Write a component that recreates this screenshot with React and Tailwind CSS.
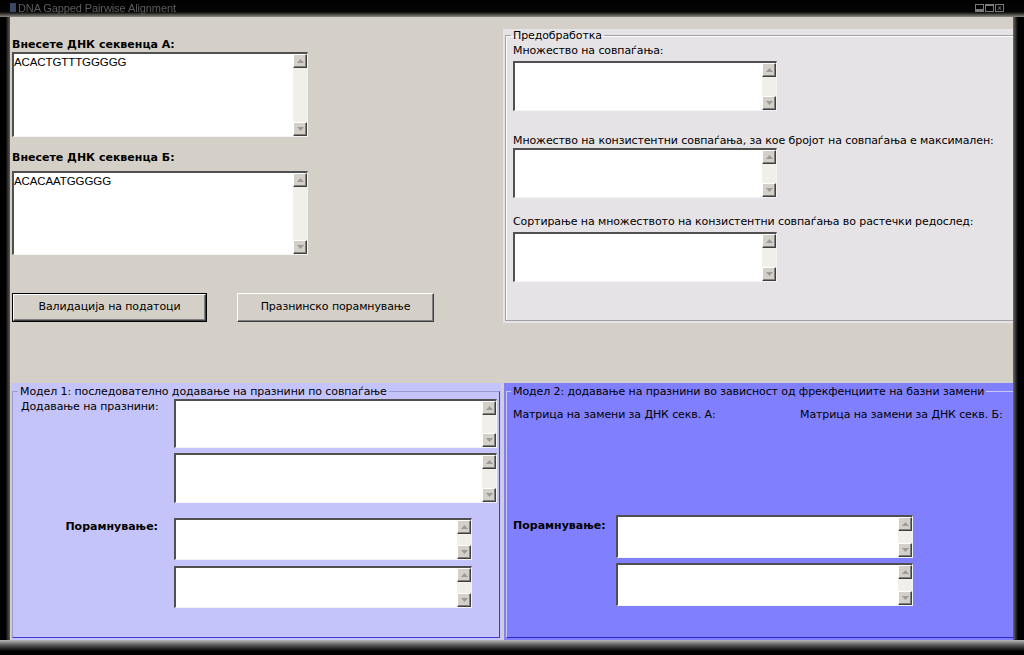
import React from 'react';

function ScrollBtn({ down }) {
  return (
    <div className="h-[14px] w-[14px] bg-[#d4d0c8] border-t border-l border-t-white border-l-white border-r border-b border-r-[#404040] border-b-[#404040] flex items-center justify-center shadow-[inset_-1px_-1px_0_#808080]">
      <svg width="7" height="4" viewBox="0 0 7 4">
        <path d={down ? 'M0 0h7L3.5 4z' : 'M0 4h7L3.5 0z'} fill="#9a9a9a" />
      </svg>
    </div>
  );
}

function TextBox({ className, text }) {
  return (
    <div className={`flex bg-white border-t-2 border-l-2 border-t-[#505050] border-l-[#505050] border-r border-b border-r-[#f4f4f4] border-b-[#f4f4f4] ${className}`}>
      <div className="flex-1 pl-[0px] pt-[2px] text-[11.5px] leading-[13px] text-black font-['Liberation_Sans',sans-serif]">{text}</div>
      <div className="w-[14px] flex flex-col bg-[#f1efea]">
        <ScrollBtn />
        <div className="flex-1" />
        <ScrollBtn down />
      </div>
    </div>
  );
}

function Button({ children, isDefault, className }) {
  return (
    <div className={`${isDefault ? 'border border-black' : ''} ${className}`}>
      <div className="h-full w-full bg-[#d4d0c8] border-t border-l border-t-white border-l-white border-r border-b border-r-[#404040] border-b-[#404040] shadow-[inset_-1px_-1px_0_#808080] flex items-center justify-center text-[11px] text-black">
        {children}
      </div>
    </div>
  );
}

function TitleBar() {
  return (
    <div className="h-[17px] flex items-start pt-[2px] pl-[10px] pr-[20px] bg-[linear-gradient(to_bottom,#000_0%,#050505_70%,#8c8a84_100%)]">
      <div className="w-[6px] h-[9px] mt-[1px] bg-[#3a4866]" />
      <span className="ml-[2px] text-[11px] leading-[12px] text-[#5c5c5c] blur-[0.6px] font-['Liberation_Sans',sans-serif]">DNA Gapped Pairwise Alignment</span>
      <div className="ml-auto flex gap-[1px] mt-[2px]">
        <div className="w-[9px] h-[8px] border border-[#7a7a7a] flex items-end"><div className="h-[2px] w-full bg-[#7a7a7a]" /></div>
        <div className="w-[9px] h-[8px] border border-[#7a7a7a] border-t-2" />
        <div className="w-[9px] h-[8px] border border-[#7a7a7a] text-[7px] leading-[6px] text-[#8a8a8a] text-center">x</div>
      </div>
    </div>
  );
}

export default function App() {
  return (
    <div className="w-[1024px] h-[655px] bg-black flex flex-col overflow-hidden font-['DejaVu_Sans',sans-serif] tracking-[-0.1px]">
      <TitleBar />
      <div className="flex h-[623px]">
        <div className="w-[10px] bg-[linear-gradient(to_right,#000_0%,#000_55%,#5c5c5c_100%)]" />
        <div className="w-[1003px] flex flex-col bg-[#d4d0c8]">
          {/* top */}
          <div className="h-[366px] flex">
            <div className="w-[493px] pl-[2px] flex flex-col">
              <div className="mt-[21px] text-[11px] leading-[14px] font-bold text-black tracking-normal">Внесете ДНК секвенца А:</div>
              <TextBox className="w-[296px] h-[85px]" text="ACACTGTTTGGGGG" />
              <div className="mt-[14px] text-[11px] leading-[14px] font-bold text-black tracking-normal">Внесете ДНК секвенца Б:</div>
              <TextBox className="mt-[6px] w-[296px] h-[84px]" text="ACACAATGGGGG" />
              <div className="mt-[38px] flex">
                <Button isDefault className="w-[195px] h-[29px]">Валидација на податоци</Button>
                <Button className="ml-[30px] w-[197px] h-[29px]">Празнинско порамнување</Button>
              </div>
            </div>
            <div className="w-[510px] mt-[12px] h-[294px] bg-[#e6e3e7] pl-[2px]">
              <fieldset className="h-[292px] border border-r-0 border-[#a3a0a4] shadow-[inset_1px_1px_0_#fff] pl-[7px] flex flex-col">
                <legend className="ml-[-2px] px-[2px] text-[11px] leading-[13px] text-black">Предобработка</legend>
                <div className="mt-[2px] text-[11px] leading-[13px] text-black">Множество на совпаѓања:</div>
                <TextBox className="mt-[4px] w-[264px] h-[50px]" />
                <div className="mt-[23px] text-[11px] leading-[13px] text-black">Множество на конзистентни совпаѓања, за кое бројот на совпаѓања е максимален:</div>
                <TextBox className="mt-[1px] w-[264px] h-[50px]" />
                <div className="mt-[17px] text-[11px] leading-[13px] text-black">Сортирање на множеството на конзистентни совпаѓања во растечки редослед:</div>
                <TextBox className="mt-[4px] w-[264px] h-[50px]" />
              </fieldset>
            </div>
          </div>
          {/* bottom */}
          <div className="h-[257px] flex">
            <div className="ml-[1px] w-[490px] bg-[#c4c4fa] pt-[2px] pl-[1px] pr-[1px]">
              <fieldset className="h-[253px] border border-[#9a9ad0] border-r-[#3c3cd4] border-b-[#3c3cd4] flex flex-col">
                <legend className="ml-[5px] px-[2px] text-[11px] leading-[13px] text-black">Модел 1: последователно додавање на празнини по совпаѓање</legend>
                <div className="mt-[1px] flex items-start">
                  <div className="w-[161px] pl-[8px] pt-[1px] text-[11px] leading-[13px] text-black">Додавање на празнини:</div>
                  <TextBox className="w-[323px] h-[49px]" />
                </div>
                <TextBox className="ml-[161px] mt-[5px] w-[323px] h-[50px]" />
                <div className="mt-[15px] flex items-start">
                  <div className="w-[161px] pr-[16px] pt-[2px] text-right text-[11px] leading-[13px] font-bold text-black tracking-normal">Порамнување:</div>
                  <TextBox className="w-[298px] h-[42px]" />
                </div>
                <TextBox className="ml-[161px] mt-[6px] w-[298px] h-[42px]" />
              </fieldset>
            </div>
            <div className="w-[3px]" />
            <div className="w-[509px] bg-[#8080ff] pt-[2px] pl-[2px]">
              <fieldset className="h-[253px] border border-r-0 border-[#c8c8f0] border-b-[#2a2ad0] flex flex-col">
                <legend className="ml-[4px] px-[2px] text-[11px] leading-[13px] text-black">Модел 2: додавање на празнини во зависност од фрекфенциите на базни замени</legend>
                <div className="mt-[10px] flex text-[11px] leading-[13px] text-black">
                  <div className="w-[293px] pl-[6px]">Матрица на замени за ДНК секв. А:</div>
                  <div>Матрица на замени за ДНК секв. Б:</div>
                </div>
                <div className="mt-[94px] flex items-start">
                  <div className="w-[109px] pl-[6px] pt-[4px] text-[11px] leading-[13px] font-bold text-black tracking-normal">Порамнување:</div>
                  <TextBox className="w-[297px] h-[43px]" />
                </div>
                <TextBox className="ml-[109px] mt-[5px] w-[297px] h-[43px]" />
              </fieldset>
            </div>
          </div>
        </div>
        <div className="flex-1 bg-[linear-gradient(to_right,#6a6a6a_0%,#000_45%)]" />
      </div>
      <div className="flex-1 bg-[linear-gradient(to_bottom,#b8b8b8_0%,#555_35%,#000_75%)]" />
    </div>
  );
}
